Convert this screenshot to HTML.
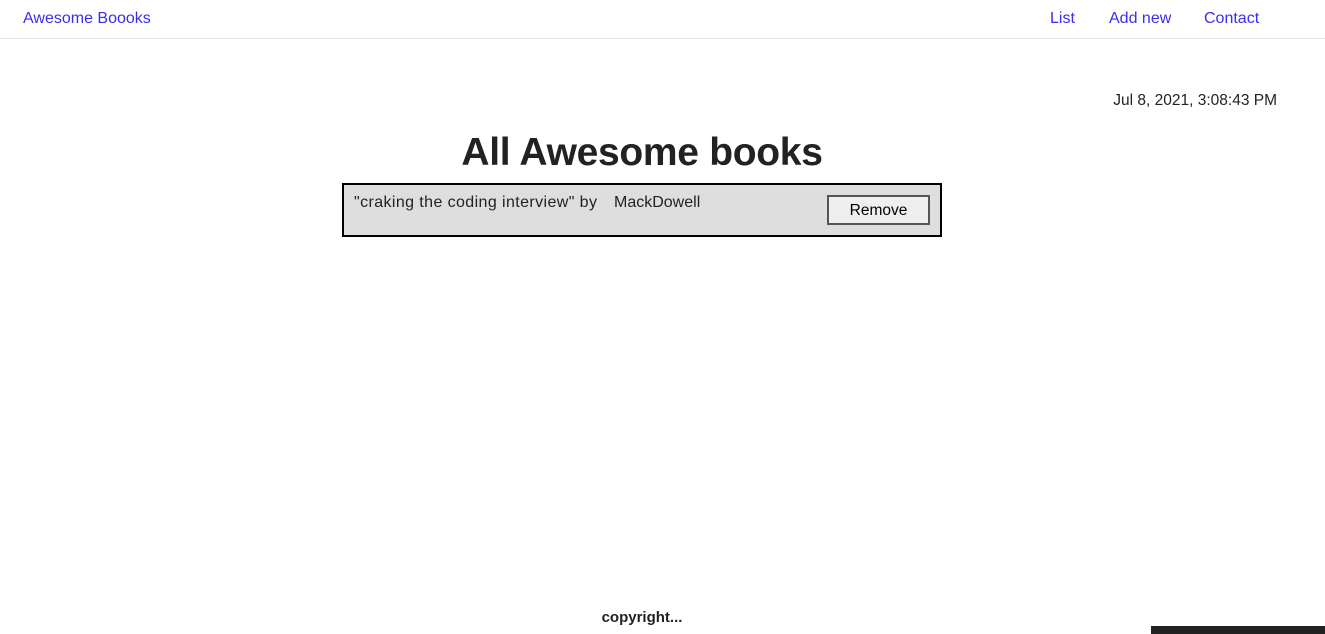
<!DOCTYPE html>
<html><head><style>
*{margin:0;padding:0;box-sizing:border-box}
body{width:1325px;height:634px;position:relative;overflow:hidden;background:#fff;font-family:"Liberation Sans",sans-serif;color:#222}
.a{position:absolute;white-space:nowrap}
.nav{color:#3a2df0;font-size:16px;top:10px}
</style></head><body>
<div class="a nav" style="left:23px">Awesome Boooks</div>
<div class="a nav" style="left:1050px">List</div>
<div class="a nav" style="left:1109px">Add new</div>
<div class="a nav" style="left:1204px">Contact</div>
<div class="a" style="left:0;top:38px;width:1325px;height:1px;background:#e2e2e2"></div>
<div class="a" style="right:48px;top:92px;font-size:15.5px">Jul 8, 2021, 3:08:43 PM</div>
<div class="a" style="left:0;width:1284px;text-align:center;top:131px;font-size:39px;font-weight:bold;letter-spacing:-0.3px">All Awesome books</div>
<div class="a" style="left:342px;top:183px;width:600px;height:54px;background:#dedede;border:2px solid #000"></div>
<div class="a" style="left:354px;top:194px;font-size:16px;letter-spacing:0.4px">"craking the coding interview" by</div>
<div class="a" style="left:614px;top:194px;font-size:16px">MackDowell</div>
<div class="a" style="left:827px;top:195px;width:103px;height:30px;background:#efefef;border:2px solid #555;font-size:15.5px;text-align:center;line-height:27px;color:#000">Remove</div>
<div class="a" style="left:0;width:1284px;text-align:center;top:609px;font-size:15px;font-weight:bold">copyright...</div>
<div class="a" style="left:1151px;top:626px;width:174px;height:8px;background:#222"></div>
</body></html>
